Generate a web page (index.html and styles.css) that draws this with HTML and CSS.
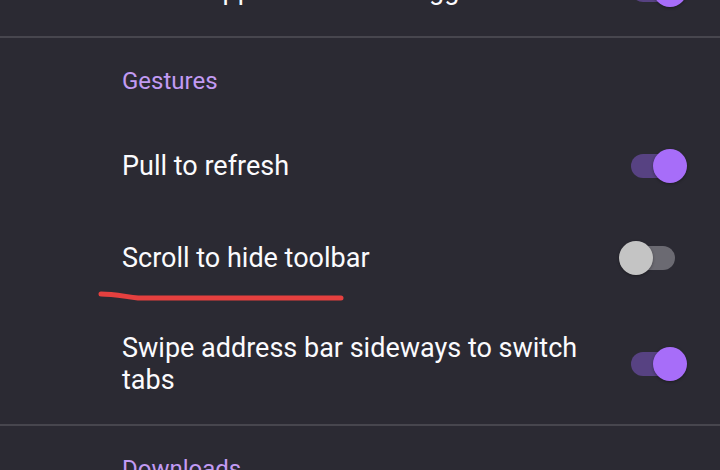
FILE: index.html
```html
<!DOCTYPE html>
<html lang="en">
<head>
    <meta charset="UTF-8">
    <meta name="viewport" content="width=device-width, initial-scale=1.0">
    <title>Settings - Customize</title>
    <link rel="stylesheet" href="styles.css">
</head>
<body>
    <div class="settings">
        <div class="pref-row first-row">
            <span class="pref-label">Show clipped domains suggestions</span>
            <span class="switch on"><span class="thumb"></span></span>
        </div>
        <div class="divider"></div>

        <div class="category">Gestures</div>
        <div class="pref-row">
            <span class="pref-label">Pull to refresh</span>
            <span class="switch on"><span class="thumb"></span></span>
        </div>
        <div class="pref-row marked">
            <span class="pref-label">Scroll to hide toolbar</span>
            <span class="switch"><span class="thumb"></span></span>
            <!-- red pen mark drawn over the screenshot -->
            <svg class="scribble" width="260" height="14" viewBox="0 0 260 14">
                <path d="M3 4 C 14 4, 24 6, 40 8 L 243 8" fill="none" stroke="#e5403f" stroke-width="5" stroke-linecap="round"/>
            </svg>
        </div>
        <div class="pref-row">
            <span class="pref-label">Swipe address bar sideways to switch tabs</span>
            <span class="switch on"><span class="thumb"></span></span>
        </div>
        <div class="divider"></div>

        <div class="category">Downloads</div>
    </div>
</body>
</html>
```

FILE: styles.css
```css
body {
    margin: 0;
    padding: 0;
    background: #2b2a33;
    color: #fbfbfe;
    font-family: Roboto, "Noto Sans", sans-serif;
    overflow: hidden;
}

.settings {
    margin-top: -56px;
}

.pref-row {
    display: flex;
    align-items: center;
    justify-content: space-between;
    gap: 30px;
    min-height: 92px;
    padding: 28px 33px 28px 122px;
    box-sizing: border-box;
}

.pref-label {
    font-size: 27px;
    line-height: 32px;
    max-width: 470px;
}

.marked {
    position: relative;
}

.scribble {
    position: absolute;
    left: 98px;
    top: 78px;
}

.divider {
    height: 2px;
    background: #47464e;
}

.category {
    padding: 28px 0 24px 122px;
    font-size: 24px;
    line-height: 30px;
    color: #c29bf3;
}

.switch {
    flex-shrink: 0;
    position: relative;
    width: 68px;
    height: 34px;
}

.switch::before {
    content: "";
    position: absolute;
    left: 12px;
    right: 12px;
    top: 5px;
    height: 24px;
    border-radius: 12px;
    background: #6b6a72;
}

.switch .thumb {
    position: absolute;
    top: 0;
    left: 0;
    width: 34px;
    height: 34px;
    border-radius: 50%;
    background: #c4c4c4;
    box-shadow: 0 1px 3px rgba(0, 0, 0, 0.35);
}

.switch.on::before {
    background: #574282;
}

.switch.on .thumb {
    left: auto;
    right: 0;
    background: #a76df9;
}
```
